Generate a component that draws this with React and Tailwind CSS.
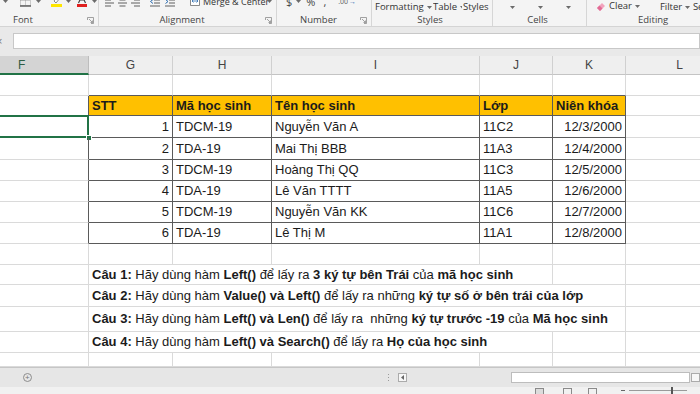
import React from "react";

const W = ["w-[89px]", "w-[84px]", "w-[99px]", "w-[208px]", "w-[73px]", "w-[73px]", "w-[108px]"];
const LETTERS = ["F", "G", "H", "I", "J", "K", "L"];

const students = [
  ["1", "TDCM-19", "Nguyễn Văn A", "11C2", "12/3/2000"],
  ["2", "TDA-19", "Mai Thị BBB", "11A3", "12/4/2000"],
  ["3", "TDCM-19", "Hoàng Thị QQ", "11C3", "12/5/2000"],
  ["4", "TDA-19", "Lê Văn TTTT", "11A5", "12/6/2000"],
  ["5", "TDCM-19", "Nguyễn Văn KK", "11C6", "12/7/2000"],
  ["6", "TDA-19", "Lê Thị M", "11A1", "12/8/2000"],
];
const dataHeights = ["h-[22px]", "h-[22px]", "h-[21px]", "h-[21px]", "h-[21px]", "h-[21px]"];

// each question: height, spill width (covered columns), how many columns it covers, text parts
const questions = [
  {
    h: "h-[20px]",
    span: "w-[464px]",
    covers: 4,
    parts: [
      ["Câu 1:", true], [" Hãy dùng hàm ", false], ["Left()", true], [" để lấy ra ", false],
      ["3 ký tự bên Trái", true], [" của ", false], ["mã học sinh", true],
    ],
  },
  {
    h: "h-[22px]",
    span: "w-[537px]",
    covers: 5,
    parts: [
      ["Câu 2:", true], [" Hãy dùng hàm ", false], ["Value() và Left()", true],
      [" để lấy ra những ", false], ["ký tự số ở bên trái của lớp", true],
    ],
  },
  {
    h: "h-[25px]",
    span: "w-[537px]",
    covers: 5,
    parts: [
      ["Câu 3:", true], [" Hãy dùng hàm ", false], ["Left() và Len()", true],
      [" để lấy ra  những ", false], ["ký tự trước -19", true], [" của ", false], ["Mã học sinh", true],
    ],
  },
  {
    h: "h-[21px]",
    span: "w-[464px]",
    covers: 4,
    parts: [
      ["Câu 4:", true], [" Hãy dùng hàm ", false], ["Left() và Search()", true],
      [" để lấy ra ", false], ["Họ của học sinh", true],
    ],
  },
];

function Caret({ className = "" }) {
  return (
    <svg width="5" height="3" viewBox="0 0 5 3" className={`shrink-0 ${className}`}>
      <path d="M0 0h5L2.5 3z" fill="#6b6b6b" />
    </svg>
  );
}

function Launcher() {
  return (
    <svg width="7" height="7" viewBox="0 0 7 7" className="shrink-0">
      <path d="M0.5 3V0.5H6.5V6.5H4" fill="none" stroke="#8c8c8c" strokeWidth="0.8" />
      <path d="M2 2L5.5 5.5M5.5 3.5V5.5H3.5" fill="none" stroke="#8c8c8c" strokeWidth="0.8" />
    </svg>
  );
}

function AlignIcon({ variant }) {
  const lines =
    variant === "left"
      ? ["M0 1h9", "M0 4h6", "M0 7h9", "M0 10h6"]
      : variant === "center"
      ? ["M0 1h9", "M1.5 4h6", "M0 7h9", "M1.5 10h6"]
      : ["M0 1h9", "M3 4h6", "M0 7h9", "M3 10h6"];
  return (
    <svg width="9" height="11" viewBox="0 0 9 11" className="shrink-0">
      {lines.map((d) => (
        <path key={d} d={d} stroke="#5f5f5f" strokeWidth="1" />
      ))}
    </svg>
  );
}

function IndentIcon({ out }) {
  return (
    <svg width="10" height="11" viewBox="0 0 10 11" className="shrink-0">
      <path d="M4 1h6M4 4h6M4 7h6M0 10h10" stroke="#5f5f5f" strokeWidth="1" />
      <path d={out ? "M3 3.5L0.5 5.5L3 7.5" : "M0.5 3.5L3 5.5L0.5 7.5"} stroke="#2b6cb0" fill="none" strokeWidth="1" />
    </svg>
  );
}

// a two-line ribbon button whose first line is mostly hidden above the window edge
function TwoLine({ w, top, bottom, caret, center }) {
  return (
    <div className={`${w} shrink-0 flex flex-col overflow-hidden ${center ? "items-center" : "items-start"}`}>
      <span className="h-[10px] text-[9px] leading-[10px] whitespace-nowrap">{top}</span>
      <span className="h-[10px] flex items-center gap-[3px] whitespace-nowrap text-[9.5px] leading-[10px]">
        {bottom}
        {caret && <Caret />}
      </span>
    </div>
  );
}

function Group({ w, label, launcher, children }) {
  return (
    <div className={`${w} shrink-0 h-full flex flex-col border-r border-[#d6d6d6]`}>
      <div className="h-[15px] overflow-hidden">{children}</div>
      <div className="h-[12px] flex items-center pr-[4px]">
        <span className="flex-1 text-center leading-none">{label}</span>
        {launcher && <Launcher />}
      </div>
    </div>
  );
}

function Ribbon() {
  return (
    <div className="h-[27px] shrink-0 flex bg-[#f4f4f4] border-b border-[#d4d4d4] text-[9.5px] text-[#444] font-['Open_Sans',Arial,sans-serif] overflow-hidden">
      {/* Font */}
      <div className="w-[99px] shrink-0 h-full flex flex-col border-r border-[#d6d6d6]">
        <div className="h-[15px] overflow-hidden">
          <div className="flex items-center h-[12px] -mt-[5px]">
            <Caret className="ml-[3px]" />
            <svg width="11" height="12" viewBox="0 0 11 12" className="ml-[12px] shrink-0">
              <path d="M0.5 0.5h10v10h-10zM5.5 0.5v10M0.5 5.5h10" fill="none" stroke="#8a8a8a" strokeWidth="0.8" strokeDasharray="1 1" />
              <path d="M0 11h11" stroke="#555" strokeWidth="1.4" />
            </svg>
            <Caret className="ml-[5px]" />
            <svg width="11" height="12" viewBox="0 0 11 12" className="ml-[10px] shrink-0">
              <path d="M3 6L7 1L9 3L5 8z" fill="#fff" stroke="#6d6d6d" strokeWidth="0.8" />
              <path d="M0 9h11v3H0z" fill="#ffe600" />
            </svg>
            <Caret className="ml-[4px]" />
            <svg width="10" height="12" viewBox="0 0 10 12" className="ml-[6px] shrink-0">
              <path d="M1.5 8L5 0.5L8.5 8M3 5h4" fill="none" stroke="#3d3d3d" strokeWidth="1.1" />
              <path d="M0 9h10v3H0z" fill="#e0201f" />
            </svg>
            <Caret className="ml-[5px]" />
          </div>
        </div>
        <div className="h-[12px] flex items-center pr-[4px]">
          <span className="ml-[13px] leading-none">Font</span>
          <span className="flex-1" />
          <Launcher />
        </div>
      </div>

      {/* Alignment */}
      <Group w="w-[178px]" label="Alignment" launcher>
        <div className="flex items-center h-[12px] -mt-[5px]">
          <span className="ml-[6px]" />
          <AlignIcon variant="left" />
          <span className="ml-[4px]" />
          <AlignIcon variant="center" />
          <span className="ml-[4px]" />
          <AlignIcon variant="right" />
          <span className="ml-[10px]" />
          <IndentIcon out />
          <span className="ml-[5px]" />
          <IndentIcon />
          <svg width="10" height="10" viewBox="0 0 10 10" className="ml-[15px] shrink-0">
            <path d="M0.5 0.5h9v9h-9z" fill="#fff" stroke="#6d6d6d" strokeWidth="0.8" />
            <path d="M2 5h6M3.5 3.5L2 5l1.5 1.5M6.5 3.5L8 5 6.5 6.5" fill="none" stroke="#2b6cb0" strokeWidth="0.8" />
          </svg>
          <span className="ml-[3px] w-[62px] leading-none whitespace-nowrap text-[9px] text-[#333]">Merge &amp; Center</span>
          <Caret className="ml-[2px]" />
        </div>
      </Group>

      {/* Number */}
      <Group w="w-[95px]" label="Number" launcher>
        <div className="flex items-center h-[12px] -mt-[5px] text-[11px] text-[#444] leading-none">
          <span className="ml-[9px]">$</span>
          <Caret className="ml-[4px]" />
          <span className="ml-[5px]">%</span>
          <span className="ml-[8px]">,</span>
          <span className="ml-[12px] text-[7px] text-[#555]">.00</span>
          <span className="ml-[1px] text-[7px] text-[#2b6cb0]">→</span>
        </div>
      </Group>

      {/* Styles */}
      <Group w="w-[121px]" label="Styles">
        <div className="flex -mt-[8px] text-[#333]">
          <span className="ml-[3px]" />
          <TwoLine w="w-[57px]" top="Conditional" bottom="Formatting" caret />
          <span className="ml-[1px]" />
          <TwoLine w="w-[29px]" top="Format as" bottom="Table" caret />
          <span className="ml-[1px]" />
          <TwoLine w="w-[30px]" top="Cell" bottom="Styles" caret />
        </div>
      </Group>

      {/* Cells */}
      <Group w="w-[94px]" label="Cells">
        <div className="flex -mt-[8px] text-[#333]">
          <span className="ml-[5px]" />
          {["Insert", "Delete", "Format"].map((t) => (
            <TwoLine key={t} w="w-[28px]" top={t} bottom={<Caret />} center />
          ))}
        </div>
      </Group>

      {/* Editing */}
      <div className="w-[130px] shrink-0 h-full flex flex-col">
        <div className="h-[15px] overflow-hidden flex">
          <div className="ml-[9px] mt-[1px] flex items-center h-[10px] gap-[3px] text-[#333]">
            <svg width="10" height="9" viewBox="0 0 10 9" className="shrink-0">
              <path d="M1 6L6 1L9 4L4 9z" fill="#f2a3bd" />
              <path d="M1 6L3.5 3.5L6.5 6.5L4 9z" fill="#e26b95" />
            </svg>
            <span className="leading-none">Clear</span>
            <Caret />
          </div>
          <div className="ml-[20px] -mt-[8px] flex text-[#333]">
            <TwoLine w="w-[30px]" top="Sort &" bottom="Filter" caret />
            <span className="ml-[3px]" />
            <TwoLine w="w-[30px]" top="Find &" bottom="Select" />
          </div>
        </div>
        <div className="h-[12px] flex items-center">
          <span className="ml-[51px] leading-none">Editing</span>
        </div>
      </div>
    </div>
  );
}

function FormulaBar() {
  return (
    <div className="h-[29px] shrink-0 bg-[#e9e9e9] flex items-start pt-[6px]">
      <div className="w-[13px] h-[16px] overflow-hidden flex items-center">
        <span className="-ml-[4px] text-[11px] leading-none text-[#7a7a7a]">×</span>
      </div>
      <div className="flex-1 h-[16px] bg-white border border-[#c8c8c8]" />
    </div>
  );
}

function ColumnHeaders() {
  return (
    <div className="h-[19px] shrink-0 flex bg-[#efefef] text-[12px] text-[#444]">
      {LETTERS.map((l, i) =>
        i === 0 ? (
          <div key={l} className={`${W[i]} shrink-0 h-full flex items-center pl-[18px] bg-[#d4d4d4] border-r border-[#bdbdbd] border-b-2 border-b-[#217346] text-[#2f5d43]`}>
            {l}
          </div>
        ) : (
          <div key={l} className={`${W[i]} shrink-0 h-full flex items-center justify-center border-r border-b border-r-[#d0d0d0] border-b-[#c4c4c4]`}>
            {l}
          </div>
        )
      )}
    </div>
  );
}

function Cell({ w, dr, db, right, bold, bg = "", children, extra = "" }) {
  return (
    <div
      className={`${w} shrink-0 h-full flex items-center px-[3px] whitespace-pre border-r border-b ${
        dr ? "border-r-[#5a5a5a]" : "border-r-[#dadada]"
      } ${db ? "border-b-[#5a5a5a]" : "border-b-[#dadada]"} ${right ? "justify-end" : ""} ${
        bold ? "font-bold" : ""
      } ${bg} ${extra}`}
    >
      {children}
    </div>
  );
}

function EmptyRow({ h, tableBottom }) {
  return (
    <div className={`${h} flex`}>
      {W.map((w, i) => (
        <Cell key={i} w={w} db={tableBottom && i >= 1 && i <= 5} />
      ))}
    </div>
  );
}

function Sheet() {
  return (
    <div className="flex-1 overflow-hidden text-[13px] text-[#1b1b1b]">
      <EmptyRow h="h-[21px]" tableBottom />

      {/* table header */}
      <div className="h-[20px] flex">
        <Cell w={W[0]} dr />
        {["STT", "Mã học sinh", "Tên học sinh", "Lớp", "Niên khóa"].map((t, i) => (
          <Cell key={t} w={W[i + 1]} dr db bold bg="bg-[#ffc000]">
            {t}
          </Cell>
        ))}
        <Cell w={W[6]} />
      </div>

      {students.map((s, r) => (
        <div key={s[0]} className={`${dataHeights[r]} flex`}>
          <Cell w={W[0]} dr extra="relative">
            {r === 0 && (
              <>
                <div className="absolute left-[-4px] top-[-1px] right-[-1px] bottom-[-1px] border-2 border-[#217346]" />
                <div className="absolute right-[-4px] bottom-[-4px] w-[6px] h-[6px] bg-[#217346] border border-white" />
              </>
            )}
          </Cell>
          <Cell w={W[1]} dr db right>{s[0]}</Cell>
          <Cell w={W[2]} dr db>{s[1]}</Cell>
          <Cell w={W[3]} dr db>{s[2]}</Cell>
          <Cell w={W[4]} dr db>{s[3]}</Cell>
          <Cell w={W[5]} dr db right>{s[4]}</Cell>
          <Cell w={W[6]} />
        </div>
      ))}

      <EmptyRow h="h-[21px]" />

      {questions.map((q) => (
        <div key={q.parts[0][0]} className={`${q.h} flex`}>
          <Cell w={W[0]} />
          <Cell w={q.span}>
            {q.parts.map(([t, b], k) => (
              <span key={k} className={b ? "font-bold" : ""}>
                {t}
              </span>
            ))}
          </Cell>
          {W.slice(1 + q.covers).map((w, i) => (
            <Cell key={i} w={w} />
          ))}
        </div>
      ))}

      <EmptyRow h="h-[14px]" />
    </div>
  );
}

function SheetBar() {
  return (
    <div className="h-[20px] shrink-0 flex items-center bg-[#e6e6e6] border-t border-[#c6c6c6]">
      <div className="ml-[23px] w-[9px] h-[9px] rounded-full border border-[#8d8d8d] flex items-center justify-center text-[8px] leading-none text-[#777]">
        +
      </div>
      <div className="ml-[356px] flex flex-col gap-[2px]">
        <span className="w-[1px] h-[1px] bg-[#9a9a9a]" />
        <span className="w-[1px] h-[1px] bg-[#9a9a9a]" />
        <span className="w-[1px] h-[1px] bg-[#9a9a9a]" />
      </div>
      <div className="ml-[9px] w-[9px] h-[9px] bg-[#f7f7f7] border border-[#ababab] flex items-center justify-center">
        <svg width="3" height="5" viewBox="0 0 3 5">
          <path d="M3 0v5L0 2.5z" fill="#666" />
        </svg>
      </div>
      <div className="ml-[104px] w-[182px] h-[11px] bg-white border border-[#bdbdbd]" />
      <div className="ml-[1px] w-[9px] h-[9px] bg-[#f7f7f7] border border-[#ababab]" />
    </div>
  );
}

function StatusBar() {
  return (
    <div className="h-[7px] shrink-0 flex items-start bg-[#f1f1f1] overflow-hidden">
      <div className="ml-[535px] mt-[1px] w-[9px] h-[8px] border border-[#8a8a8a] bg-[#dcdcdc]" />
      <div className="ml-[19px] mt-[1px] w-[9px] h-[8px] border border-[#8a8a8a]" />
      <div className="ml-[16px] mt-[1px] w-[9px] h-[8px] border border-[#8a8a8a]" />
      <div className="ml-[24px] mt-[3px] w-[4px] h-[1px] bg-[#666]" />
      <div className="ml-[4px] mt-[3px] w-[42px] h-[1px] bg-[#9a9a9a]" />
      <div className="mt-[0px] w-[2px] h-[7px] bg-[#555]" />
      <div className="mt-[3px] w-[14px] h-[1px] bg-[#9a9a9a]" />
    </div>
  );
}

export default function App() {
  return (
    <div className="w-[700px] h-[394px] overflow-hidden bg-white flex flex-col font-['Liberation_Sans',Arial,sans-serif]">
      <Ribbon />
      <FormulaBar />
      <ColumnHeaders />
      <Sheet />
      <SheetBar />
      <StatusBar />
    </div>
  );
}
